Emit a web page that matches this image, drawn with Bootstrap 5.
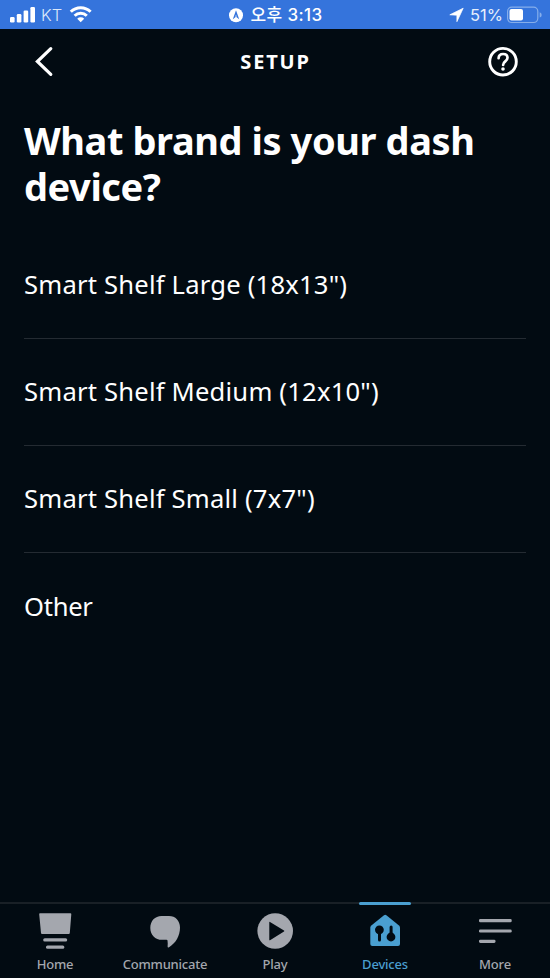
<!DOCTYPE html>
<html lang="en">
<head>
<meta charset="utf-8">
<meta name="viewport" content="width=device-width, initial-scale=1">
<title>Setup</title>
<link href="https://cdn.jsdelivr.net/npm/bootstrap@5.3.0/dist/css/bootstrap.min.css" rel="stylesheet">
<style>
  body { background: #020b12; color: #fff; font-family: "Noto Sans", "Noto Sans CJK KR", sans-serif; height: 978px; overflow: hidden; }
  svg { display: block; flex: none; }
  .status { background: #3574dc; height: 29px; font-family: Inter, "Noto Sans CJK KR", sans-serif; line-height: 29px; font-size: 17px; }
  .status > div { height: 29px; }
  .carrier { margin-left: 6px; width: 28px; font-size: 16.5px; color: #dce8fa; font-weight: 300; padding-top: 2px; }
  .clock { font-size: 17px; font-weight: 500; margin-left: 7px; padding-top: 1px; white-space: nowrap; width: 70px; letter-spacing: .4px; }
  .charge { font-size: 16.5px; color: #e6effc; width: 37px; margin-left: 6px; padding-top: 2px; }
  .topbar { height: 65px; padding: 0 31px 0 34px; }
  .topbar h1 { font-size: 20px; font-weight: 700; letter-spacing: 1.8px; line-height: 1; padding-left: 10px; }
  .question { font-size: 38px; font-weight: 700; line-height: 46px; letter-spacing: -.42px; padding: 23px 24px 0; height: 138px; white-space: nowrap; }
  .brands { padding: 0 24px; }
  .brands .list-group-item { height: 107px; background: none; color: #fff; border-color: #242b32; font-size: 25.6px; letter-spacing: .2px; padding: 1px 0 0; white-space: nowrap; }
  .brands .list-group-item:last-child { letter-spacing: -.3px; }
  .tabs { height: 76px; border-top: 2px solid #192026; }
  .tab { color: #a4a7ae; width: 110px; font-size: 13px; font-weight: 500; line-height: 18px; letter-spacing: -.2px; }
  .tab svg { margin-top: 4px; margin-bottom: 3px; }
  .tab.active { color: #4a9fd0; }
  .tab.active::before { content: ""; position: absolute; top: -2px; left: 29px; width: 52px; height: 3px; border-radius: 2px; background: #4a9fd0; }
</style>
<script src="https://cdn.jsdelivr.net/npm/bootstrap@5.3.0/dist/js/bootstrap.bundle.min.js"></script>
</head>
<body class="d-flex flex-column">
<header class="status row g-0 flex-nowrap">
  <div class="col-4 d-flex align-items-center">
    <svg width="35" height="29" fill="#fff"><rect x="10" y="17" width="4.6" height="5.5" rx="1.2"/><rect x="16.8" y="14" width="4.6" height="8.5" rx="1.2"/><rect x="23.6" y="10.5" width="4.6" height="12" rx="1.2"/><rect x="30.4" y="7" width="4.6" height="15.5" rx="1.2"/></svg>
    <span class="carrier">KT</span>
    <svg width="24" height="29" viewBox="69 0 24 29" fill="none" stroke="#fff" stroke-width="3"><path d="M70.8 11.8a14 14 0 0 1 19.8 0M74.6 15.7a8.7 8.7 0 0 1 12.2 0"/><path d="M77.2 18.8a5 5 0 0 1 7 0L80.7 22.3z" fill="#fff" stroke="none"/></svg>
  </div>
  <div class="col-4 d-flex align-items-center justify-content-center">
    <svg width="14" height="29" viewBox="0 0 14 29"><circle cx="7" cy="15.3" r="7" fill="#fff"/><path d="M7 10.2 10.2 19.2 7 16.8 3.8 19.2z" fill="#3574dc"/><path d="M7 14.6 7.7 17 7 16.6 6.3 17z" fill="#fff"/></svg>
    <span class="clock">오후 3:13</span>
  </div>
  <div class="col-4 d-flex align-items-center justify-content-end">
    <svg width="15" height="29" viewBox="449 0 15 29"><path d="M463.2 8.2 456.9 21.7V15.2L449.8 14.8z" fill="#fff" stroke="#fff" stroke-width=".7" stroke-linejoin="round"/></svg>
    <span class="charge">51%</span>
    <svg width="43" height="29" viewBox="507 0 43 29"><rect x="507.6" y="7.1" width="30.2" height="15.4" rx="4.2" fill="none" stroke="#86aeeb" stroke-width="1.2"/><rect x="509.5" y="9" width="13.5" height="11.5" rx="2" fill="#fff"/><path d="M539.7 12.3q2 .5 2 2.6t-2 2.6z" fill="#86aeeb"/></svg>
  </div>
</header>
<nav class="topbar d-flex align-items-center justify-content-between">
  <svg width="20" height="32" viewBox="34 46 20 32"><path d="M50.8 48.6 37.4 61.5 50.8 74.4" fill="none" stroke="#fff" stroke-width="3.2" stroke-linecap="round" stroke-linejoin="miter"/></svg>
  <h1 class="m-0">SETUP</h1>
  <svg width="32" height="32" viewBox="487 46 32 32" fill="none" stroke="#fff"><circle cx="503" cy="61.7" r="13.3" stroke-width="2.9"/><path d="M498.6 58.2c.1-2.7 1.9-4.2 4.5-4.2s4.4 1.5 4.4 3.8c0 3.6-4.4 3.6-4.4 7.1" stroke-width="2.7" stroke-linecap="round"/><circle cx="503" cy="69" r="1.8" fill="#fff" stroke="none"/></svg>
</nav>
<h2 class="question m-0">What brand is your dash<br>device?</h2>
<main class="brands flex-grow-1">
  <div class="list-group list-group-flush">
    <a class="list-group-item d-flex align-items-center"><span>Smart Shelf Large (18x13")</span></a>
    <a class="list-group-item d-flex align-items-center"><span>Smart Shelf Medium (12x10")</span></a>
    <a class="list-group-item d-flex align-items-center"><span>Smart Shelf Small (7x7")</span></a>
    <a class="list-group-item d-flex align-items-center"><span>Other</span></a>
  </div>
</main>
<footer class="tabs d-flex">
  <div class="tab d-flex flex-column align-items-center"><svg width="40" height="44" viewBox="35 908 40 44" fill="currentColor"><path d="M40 913.3h30.4q1 0 .9 1L69.8 933q-.1 1-1 1H42q-.9 0-1-1l-1.8-18.7q-.1-1 .8-1z"/><rect x="43.2" y="938.2" width="24" height="3.3" rx="1.6"/><rect x="46" y="945.6" width="18.3" height="3.1" rx="1.5"/></svg><span>Home</span></div>
  <div class="tab d-flex flex-column align-items-center"><svg width="40" height="44" viewBox="145 908 40 44" fill="currentColor"><path d="M161.500 916H169c6.500 0 11 4.800 11 11.500 0 8.500-4.200 15.500-11 19.800-.8.500-1.500.1-1.400-.8.200-2 .2-4-.1-6q-.1-.7-1-.7H162c-6.800 0-11.700-5-11.700-11.900S155 916 161.500 916z"/></svg><span>Communicate</span></div>
  <div class="tab d-flex flex-column align-items-center"><svg width="40" height="44" viewBox="255 908 40 44"><circle cx="275.2" cy="931" r="17.8" fill="currentColor"/><path d="M269.300 922.300v17.500q0 .8.700.4L284 931.600q.7-.5 0-1L270 921.900q-.7-.4-.7.400z" fill="#020b12"/></svg><span>Play</span></div>
  <div class="tab active position-relative d-flex flex-column align-items-center"><svg width="40" height="44" viewBox="365 908 40 44"><path d="M384 915.200q1.200-.8 2.400 0l12.600 10.300q1 .9 1 2V944q0 2-2 2H372.300q-2 0-2-2V927.500q0-1.100 1-2z" fill="currentColor"/><g fill="#020b12"><circle cx="379.4" cy="929.8" r="4.4"/><rect x="378" y="931" width="3" height="10.5" rx="1.5"/><circle cx="391" cy="937" r="4.4"/><rect x="389.6" y="925.5" width="3" height="11" rx="1.5"/></g></svg><span>Devices</span></div>
  <div class="tab d-flex flex-column align-items-center"><svg width="40" height="44" viewBox="475 908 40 44" fill="currentColor"><rect x="479" y="919" width="32.7" height="3.2" rx="1.3"/><rect x="479" y="929.4" width="32.7" height="3.2" rx="1.3"/><rect x="479" y="939.7" width="16.5" height="3.2" rx="1.3"/></svg><span>More</span></div>
</footer>
</body>
</html>
